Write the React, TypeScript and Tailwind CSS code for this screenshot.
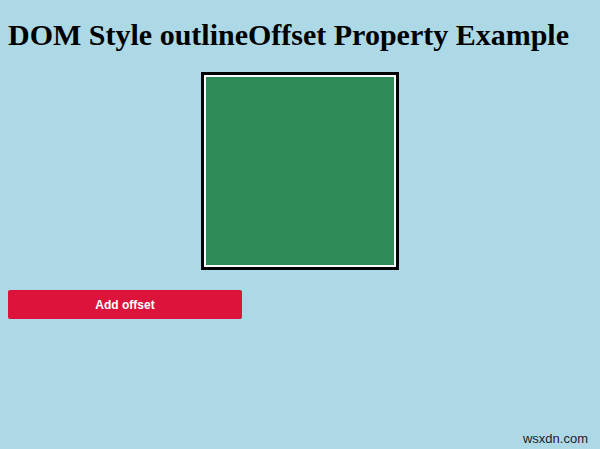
const App = () => {
  return (
    <div className="relative min-h-screen bg-[#add8e6] px-2 py-[1px] font-['Liberation_Serif',serif] text-black">
      <h1 className="mt-[17px] mb-[20px] text-[30px] font-bold leading-[34px] whitespace-nowrap">
        DOM Style outlineOffset Property Example
      </h1>

      {/* box with outline offset */}
      <div className="mx-auto w-[198px] border-[3px] border-black bg-white p-[2px]">
        <div className="h-[188px] w-full bg-[#2e8b57]" />
      </div>

      <button className="mt-[20px] h-[29px] w-[234px] rounded-[2px] bg-[#dc143c] font-['Liberation_Sans',sans-serif] text-[12px] font-bold text-white">
        Add offset
      </button>

      <span className="absolute right-[12px] bottom-[1px] font-['Liberation_Sans',sans-serif] text-[13px] text-[#222]">
        wsxdn.com
      </span>
    </div>
  );
};

export default App;
